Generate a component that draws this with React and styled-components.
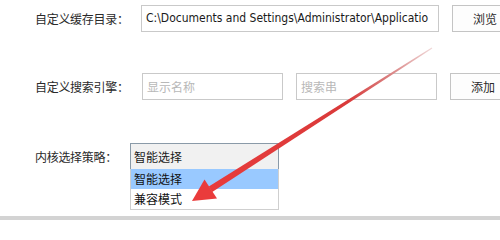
import React from "react";
import styled, { createGlobalStyle } from "styled-components";

const GlobalStyle = createGlobalStyle`
  html, body {
    margin: 0;
    padding: 0;
    background: #ffffff;
  }
  body {
    width: 500px;
    height: 220px;
    overflow: hidden;
    font-family: "Noto Sans CJK SC", "Liberation Sans", sans-serif;
    font-size: 12px;
    color: #222;
  }
`;

const Page = styled.div`
  position: relative;
  width: 500px;
  height: 220px;
  overflow: hidden;
  display: flex;
  flex-direction: column;
`;

const Form = styled.div`
  flex: 1;
  display: flex;
  flex-direction: column;
  padding: 5px 0 0 35px;
`;

const Row = styled.div`
  display: flex;
  align-items: flex-start;
  height: 27px;
  margin-top: ${(p) => p.$top || 0}px;
`;

const Label = styled.div`
  width: ${(p) => p.$width}px;
  flex: none;
  line-height: 27px;
  font-size: 12px;
  color: #2a2a2a;
  letter-spacing: -0.3px;
`;

const TextBox = styled.div`
  box-sizing: border-box;
  width: ${(p) => p.$width}px;
  height: 27px;
  margin-right: ${(p) => p.$gap || 0}px;
  flex: none;
  border: 1px solid #c9c9c9;
  background: #fff;
  padding: 0 4px;
  line-height: 25px;
  white-space: nowrap;
  overflow: hidden;
  font-family: ${(p) => (p.$latin ? '"DejaVu Sans Condensed", "Liberation Sans", sans-serif' : '"Noto Sans CJK SC", sans-serif')};
  font-size: 12px;
  color: ${(p) => (p.$placeholder ? "#b8b8b8" : "#1a1a1a")};
`;

const Button = styled.div`
  box-sizing: border-box;
  width: 70px;
  height: 27px;
  flex: none;
  border: 1px solid #c4c4c4;
  background: #fdfdfd;
  line-height: 25px;
  padding-left: 20px;
  color: #2a2a2a;
`;

const SelectWrap = styled.div`
  position: relative;
  width: 149px;
  flex: none;
`;

const SelectBox = styled.div`
  box-sizing: border-box;
  height: 27px;
  border: 1px solid #8a9aa8;
  background: #f1f1f1;
  line-height: 25px;
  padding-left: 3px;
  color: #1a1a1a;
`;

const DropList = styled.div`
  position: absolute;
  left: 0;
  top: 26px;
  width: 149px;
  box-sizing: border-box;
  border: 1px solid #cfcfcf;
  border-top: none;
  background: #fff;
`;

const Option = styled.div`
  height: 20px;
  line-height: 20px;
  padding-left: 3px;
  background: ${(p) => (p.$active ? "#99c9ff" : "#fff")};
  color: #111;
`;

const Footer = styled.div`
  height: 4px;
  background: #d3d3d3;
`;

const ArrowLayer = styled.svg`
  position: absolute;
  left: 0;
  top: 0;
  pointer-events: none;
`;

function Arrow() {
  return (
    <ArrowLayer width="500" height="220" viewBox="0 0 500 220">
      <defs>
        <linearGradient id="arrowFade" gradientUnits="userSpaceOnUse" x1="432" y1="48" x2="192" y2="201">
          <stop offset="0" stopColor="#f0d8d8" />
          <stop offset="0.18" stopColor="#d98080" />
          <stop offset="0.35" stopColor="#d93a3a" />
          <stop offset="1" stopColor="#ea3b3b" />
        </linearGradient>
      </defs>
      <polygon
        points="432.3,48.4 431.7,47.6 208.8,186.5 212.2,191.9"
        fill="url(#arrowFade)"
      />
      <polygon points="217,198.5 204.5,179.5 192,201" fill="#ea3b3b" />
    </ArrowLayer>
  );
}

export default function App() {
  return (
    <>
      <GlobalStyle />
      <Page>
        <Form>
          <Row>
            <Label $width={106}>自定义缓存目录：</Label>
            <TextBox $width={298} $gap={13} $latin>
              C:\Documents and Settings\Administrator\Applicatio
            </TextBox>
            <Button>浏览</Button>
          </Row>
          <Row $top={41}>
            <Label $width={107}>自定义搜索引擎：</Label>
            <TextBox $width={141} $gap={13} $placeholder>
              显示名称
            </TextBox>
            <TextBox $width={141} $gap={13} $placeholder>
              搜索串
            </TextBox>
            <Button>添加</Button>
          </Row>
          <Row $top={43}>
            <Label $width={95}>内核选择策略：</Label>
            <SelectWrap>
              <SelectBox>智能选择</SelectBox>
              <DropList>
                <Option $active>智能选择</Option>
                <Option>兼容模式</Option>
              </DropList>
            </SelectWrap>
          </Row>
        </Form>
        <Footer />
        <Arrow />
      </Page>
    </>
  );
}
